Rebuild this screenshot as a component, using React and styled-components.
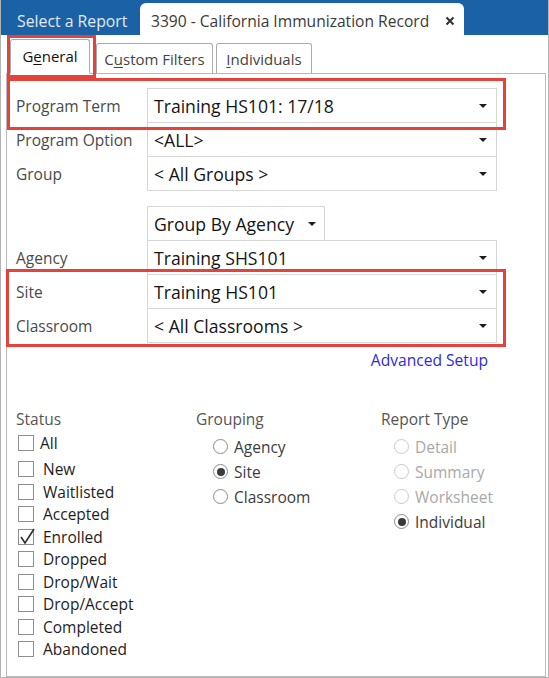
import React from 'react';
import styled, { createGlobalStyle } from 'styled-components';

const Global = createGlobalStyle`
  html, body { margin: 0; padding: 0; background: #fff; }
  body { font-family: "Open Sans", "Noto Sans", sans-serif; }
  * { box-sizing: border-box; }
`;

const Window = styled.div`
  position: relative;
  width: 549px;
  height: 678px;
  border: 1px solid #b3b3b3;
  border-top: none;
  display: flex;
  flex-direction: column;
  background: #fff;
  overflow: hidden;
`;

const TitleStrip = styled.div`
  height: 35px;
  flex: none;
  background: #1a61a6;
  display: flex;
  align-items: flex-end;
`;

const DocTab = styled.div`
  width: 139px;
  height: 35px;
  padding: 7px 0 0 16px;
  display: flex;
  align-items: center;
  color: #e3ebf3;
  font-size: 15.8px;
`;

const ActiveDocTab = styled.div`
  width: 324px;
  height: 32px;
  background: #fff;
  border-radius: 6px 6px 0 0;
  display: flex;
  align-items: center;
  justify-content: space-between;
  padding: 4px 9px 0 11px;
  color: #3a3a3a;
  font-size: 15.6px;
`;

const CloseIcon = styled.svg`
  width: 10px;
  height: 10px;
  margin-top: -1px;
`;

const Body = styled.div`
  flex: 1;
  display: flex;
  flex-direction: column;
  padding: 4px 2px 0 5px;
`;

const TabStrip = styled.div`
  height: 34px;
  flex: none;
  display: flex;
  align-items: flex-end;
  padding-left: 4px;
  position: relative;
  z-index: 1;
`;

const Tab = styled.div`
  width: ${p => p.$w}px;
  height: ${p => (p.$active ? 35 : 30)}px;
  margin-left: ${p => p.$ml || 0}px;
  margin-bottom: ${p => (p.$active ? -1 : 0)}px;
  border: 1px solid #acacac;
  border-bottom: ${p => (p.$active ? '1px solid #fff' : 'none')};
  border-radius: 3px 3px 0 0;
  background: #fff;
  display: flex;
  align-items: center;
  justify-content: center;
  padding-bottom: ${p => (p.$active ? 2 : 0)}px;
  color: ${p => (p.$active ? '#111' : '#444')};
  font-size: 15px;
  u { text-decoration-thickness: 1px; text-underline-offset: 2px; }
`;

const Panel = styled.div`
  flex: 1;
  border: 1px solid #b9b9b9;
  padding: 14px 0 0 9px;
  display: flex;
  flex-direction: column;
`;

const FieldRow = styled.div`
  display: grid;
  grid-template-columns: 131px auto;
  align-items: center;
  height: 35px;
  margin-top: ${p => (p.$gap != null ? p.$gap : -1)}px;
`;

const Label = styled.span`
  color: #4a4a4a;
  font-size: 15.5px;
  padding-top: ${p => p.$dy || 0}px;
`;

const Select = styled.div`
  width: ${p => p.$w || 350}px;
  height: 35px;
  border: 1px solid #d6d6d6;
  background: #fff;
  display: flex;
  align-items: center;
  justify-content: space-between;
  padding: 0 ${p => p.$pr || 9}px 0 6px;
  color: #151515;
  font-size: 17.6px;
`;

const Caret = styled.span`
  width: 0;
  height: 0;
  border-left: 4px solid transparent;
  border-right: 4px solid transparent;
  border-top: 4px solid #1e1e1e;
  margin-top: 1px;
`;

const LinkRow = styled.div`
  width: 472px;
  margin-top: 7px;
  text-align: right;
  line-height: 20px;
`;

const Link = styled.span`
  color: #2b2bdc;
  font-size: 15.6px;
`;

const Options = styled.div`
  display: grid;
  grid-template-columns: 180px 185px auto;
  margin-top: 39px;
`;

const Column = styled.div`
  display: flex;
  flex-direction: column;
`;

const GroupTitle = styled.div`
  color: #555;
  font-size: 15.5px;
  line-height: 20px;
  height: 20px;
`;

const CheckRow = styled.div`
  display: flex;
  align-items: center;
  height: ${p => p.$h || 22.5}px;
  margin-top: ${p => p.$mt || 0}px;
  padding-left: 2px;
  gap: ${p => p.$gap || 9}px;
  color: #1e1e1e;
  font-size: 15.5px;
`;

const Box = styled.span`
  position: relative;
  width: 16px;
  height: 16px;
  border: 1px solid #8e8e8e;
  background: #fff;
  flex: none;
  svg { position: absolute; left: -1px; top: -2px; overflow: visible; }
`;

const RadioList = styled.div`
  display: flex;
  flex-direction: column;
  margin-top: 5px;
  padding-left: ${p => p.$pl}px;
`;

const RadioRow = styled.div`
  display: flex;
  align-items: center;
  height: 25px;
  gap: 6px;
  color: ${p => (p.$disabled ? '#a8a8a8' : '#3c3c3c')};
  font-size: 15.5px;
`;

const Radio = styled.span`
  width: 15px;
  height: 15px;
  border-radius: 50%;
  border: 1px solid ${p => (p.$disabled ? '#cacaca' : '#8a8a8a')};
  background: #fff;
  flex: none;
  display: flex;
  align-items: center;
  justify-content: center;
  &::after {
    content: '';
    display: ${p => (p.$checked ? 'block' : 'none')};
    width: 8px;
    height: 8px;
    border-radius: 50%;
    background: #3a3a3a;
  }
`;

const Highlight = styled.div`
  position: absolute;
  left: ${p => p.$x}px;
  top: ${p => p.$y}px;
  width: ${p => p.$w}px;
  height: ${p => p.$h}px;
  border: 3px solid #e4433b;
  pointer-events: none;
  z-index: 5;
`;

const Check = () => (
  <svg width="17" height="17" viewBox="0 0 17 17">
    <polyline points="3,9 7,15 16,1" fill="none" stroke="#2e2e2e" strokeWidth="1.6" />
  </svg>
);

const Field = ({ label, value, gap, w, pr }) => (
  <FieldRow $gap={gap}>
    <Label>{label}</Label>
    <Select $w={w} $pr={pr}>
      <span>{value}</span>
      <Caret />
    </Select>
  </FieldRow>
);

const statuses = [
  ['New', false],
  ['Waitlisted', false],
  ['Accepted', false],
  ['Enrolled', true],
  ['Dropped', false],
  ['Drop/Wait', false],
  ['Drop/Accept', false],
  ['Completed', false],
  ['Abandoned', false],
];

export default function App() {
  return (
    <>
      <Global />
      <Window>
        <TitleStrip>
          <DocTab>Select a Report</DocTab>
          <ActiveDocTab>
            <span>3390 - California Immunization Record</span>
            <CloseIcon viewBox="0 0 10 10">
              <path d="M1.5 1.5 L8.5 8.5 M8.5 1.5 L1.5 8.5" stroke="#333" strokeWidth="2.1" />
            </CloseIcon>
          </ActiveDocTab>
        </TitleStrip>
        <Body>
          <TabStrip>
            <Tab $active $w={80}>
              <span>G<u>e</u>neral</span>
            </Tab>
            <Tab $w={117} $ml={6}>
              <span>C<u>u</u>stom Filters</span>
            </Tab>
            <Tab $w={96} $ml={3}>
              <span><u>I</u>ndividuals</span>
            </Tab>
          </TabStrip>
          <Panel>
            <Field gap={0} label="Program Term" value="Training HS101: 17/18" />
            <Field label="Program Option" value="<ALL>" />
            <Field label="Group" value="< All Groups >" />
            <Field gap={15} label="" value="Group By Agency" w={178} pr={8} />
            <Field label="Agency" value="Training SHS101" />
            <Field label="Site" value="Training HS101" />
            <Field label="Classroom" value="< All Classrooms >" />
            <LinkRow>
              <Link>Advanced Setup</Link>
            </LinkRow>
            <Options>
              <Column>
                <GroupTitle>Status</GroupTitle>
                <CheckRow $h={22} $mt={3} $gap={6}>
                  <Box />
                  <span>All</span>
                </CheckRow>
                <Column style={{ marginTop: 4 }}>
                  {statuses.map(([name, checked]) => (
                    <CheckRow key={name}>
                      <Box>{checked && <Check />}</Box>
                      <span>{name}</span>
                    </CheckRow>
                  ))}
                </Column>
              </Column>
              <Column>
                <GroupTitle>Grouping</GroupTitle>
                <RadioList $pl={17}>
                  <RadioRow><Radio /><span>Agency</span></RadioRow>
                  <RadioRow><Radio $checked /><span>Site</span></RadioRow>
                  <RadioRow><Radio /><span>Classroom</span></RadioRow>
                </RadioList>
              </Column>
              <Column>
                <GroupTitle>Report Type</GroupTitle>
                <RadioList $pl={13}>
                  <RadioRow $disabled><Radio $disabled /><span>Detail</span></RadioRow>
                  <RadioRow $disabled><Radio $disabled /><span>Summary</span></RadioRow>
                  <RadioRow $disabled><Radio $disabled /><span>Worksheet</span></RadioRow>
                  <RadioRow><Radio $checked /><span>Individual</span></RadioRow>
                </RadioList>
              </Column>
            </Options>
          </Panel>
        </Body>
        <Highlight $x={6} $y={35} $w={89} $h={43} />
        <Highlight $x={6} $y={78} $w={499} $h={52} />
        <Highlight $x={5} $y={269} $w={500} $h={78} />
      </Window>
    </>
  );
}
